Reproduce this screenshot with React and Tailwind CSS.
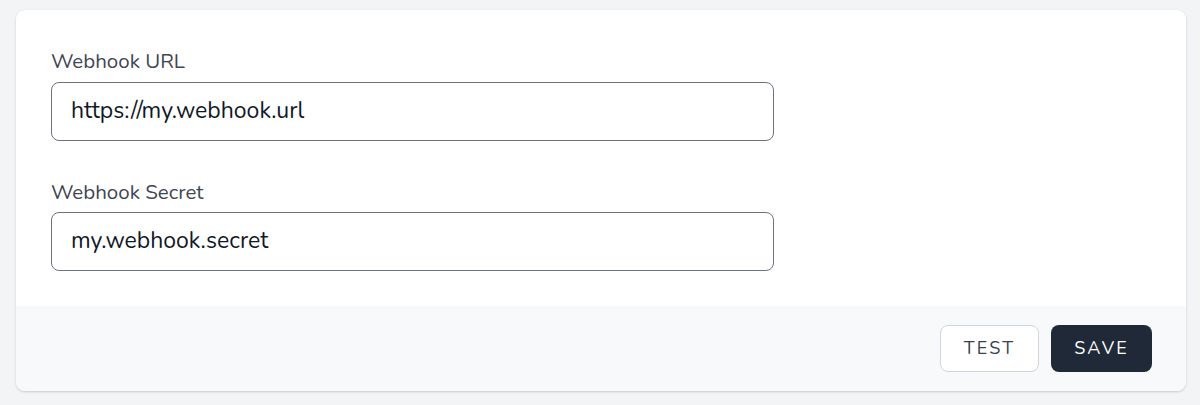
import React from "react";

export default function App() {
  const font = { fontFamily: "Nunito, Lato, 'Noto Sans', sans-serif" };
  return (
    <div className="w-[1200px] h-[405px] bg-[#f3f4f6] pt-[10px] pl-[16px]" style={font}>
      <div className="w-[1170px] h-[381px] bg-white rounded-[9px] shadow-[0_1px_3px_rgba(0,0,0,0.12),0_1px_2px_rgba(0,0,0,0.06)] overflow-hidden flex flex-col">
        <div className="px-[35px] pt-[37px] h-[296px]">
          <div className="text-[20.5px] leading-[28px] text-[#3f4654]">Webhook URL</div>
          <div className="mt-[7px] w-[723px] h-[59px] border border-[#6b7280] rounded-[8px] flex items-center pl-[19px] text-[23px] text-[#111827]">
            https://my.webhook.url
          </div>
          <div className="mt-[37px] text-[20.5px] leading-[28px] text-[#3f4654]">Webhook Secret</div>
          <div className="mt-[6px] w-[723px] h-[59px] border border-[#6b7280] rounded-[8px] flex items-center pl-[19px] text-[23px] text-[#111827]">
            my.webhook.secret
          </div>
        </div>
        <div className="flex-1 bg-[#f8f9fb] flex items-center justify-end gap-[12px] pr-[34px]">
          <button className="w-[99px] h-[47px] rounded-[8px] border border-[#d1d5db] bg-white text-[18px] tracking-[0.12em] text-[#374151]">
            TEST
          </button>
          <button className="w-[101px] h-[47px] rounded-[8px] bg-[#1f2937] text-[18px] tracking-[0.12em] text-white">
            SAVE
          </button>
        </div>
      </div>
    </div>
  );
}
